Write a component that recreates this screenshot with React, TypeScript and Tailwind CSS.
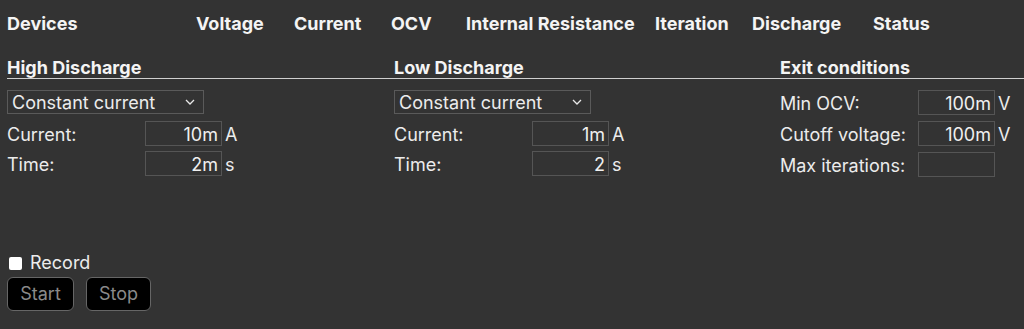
import React from "react";

const headers: [string, number][] = [
  ["Devices", 189],
  ["Voltage", 98],
  ["Current", 97],
  ["OCV", 75],
  ["Internal Resistance", 189],
  ["Iteration", 97],
  ["Discharge", 121],
  ["Status", 100],
];

function Field({ label, value, unit }: { label: string; value: string; unit: string }) {
  return (
    <div className="flex items-center h-[25px] pt-[2px]">
      <div className="w-[138px] shrink-0">{label}</div>
      <div className="w-[77px] h-[25px] -mt-[2px] pt-[2px] border border-[#555] flex items-center justify-end pr-[3px] text-[#f0f0f0] shrink-0">
        {value}
      </div>
      <div className="ml-[3px]">{unit}</div>
    </div>
  );
}

function Select() {
  return (
    <div className="w-[197px] h-[24px] border border-[#5a5a5a] flex items-center justify-between pl-[4px] pr-[8px]">
      <span className="pt-[2px]">Constant current</span>
      <svg width="10" height="6" viewBox="0 0 10 6" fill="none" stroke="#e8e8e8" strokeWidth="1.3">
        <path d="M1 1 L5 5 L9 1" />
      </svg>
    </div>
  );
}

export default function App() {
  return (
    <div
      className="w-[1024px] h-[329px] bg-[#333333] text-[#ececec] text-[18px] leading-none overflow-hidden"
      style={{ fontFamily: "Inter, 'Noto Sans', sans-serif" }}
    >
      <div className="flex pl-[7px] pt-[15px] h-[40px] font-bold text-[#f4f4f4]">
        {headers.map(([h, w]) => (
          <div key={h} style={{ width: w }} className="shrink-0">
            {h}
          </div>
        ))}
      </div>
      <div className="pl-[7px] pt-[19px]">
        <div className="flex h-[20px] border-b border-[#cfcfcf] font-bold text-[#f4f4f4]">
          <div className="w-[387px]">High Discharge</div>
          <div className="w-[386px]">Low Discharge</div>
          <div>Exit conditions</div>
        </div>
      </div>
      <div className="flex pl-[7px] pt-[11px]">
        <div className="w-[387px] flex flex-col">
          <Select />
          <div className="flex flex-col gap-[5px] mt-[7px]">
            <Field label="Current:" value="10m" unit="A" />
            <Field label="Time:" value="2m" unit="s" />
          </div>
        </div>
        <div className="w-[386px] flex flex-col">
          <Select />
          <div className="flex flex-col gap-[5px] mt-[7px]">
            <Field label="Current:" value="1m" unit="A" />
            <Field label="Time:" value="2" unit="s" />
          </div>
        </div>
        <div className="flex flex-col gap-[6px]">
          <Field label="Min OCV:" value="100m" unit="V" />
          <Field label="Cutoff voltage:" value="100m" unit="V" />
          <Field label="Max iterations:" value="" unit="" />
        </div>
      </div>
      <div className="pl-[7px] mt-[77px]">
        <div className="flex items-center h-[18px]">
          <div className="w-[13px] h-[13px] bg-white rounded-[2px] ml-[2px]" />
          <span className="ml-[8px]">Record</span>
        </div>
        <div className="flex gap-[12px] mt-[5px]">
          <div className="w-[67px] h-[34px] bg-black border border-[#666] rounded-[6px] flex items-center justify-center text-[#8a8a8a]">
            Start
          </div>
          <div className="w-[65px] h-[34px] bg-black border border-[#666] rounded-[6px] flex items-center justify-center text-[#8a8a8a]">
            Stop
          </div>
        </div>
      </div>
    </div>
  );
}
